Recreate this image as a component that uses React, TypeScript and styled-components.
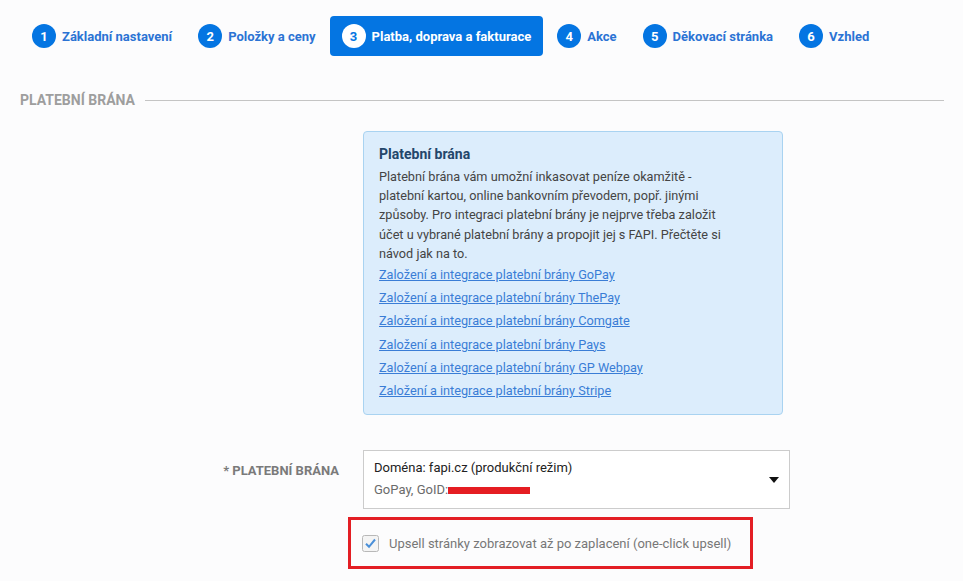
import styled, { createGlobalStyle } from "styled-components"

const GlobalStyle = createGlobalStyle`
  html, body {
    margin: 0;
    padding: 0;
    background: #fcfcfd;
    font-family: Roboto, "Noto Sans", Arial, sans-serif;
  }
`

const Page = styled.div`
  width: 963px;
  height: 581px;
  overflow: hidden;
  padding: 16px 19px 0 20px;
  box-sizing: border-box;
`

const Tabs = styled.nav`
  display: flex;
  gap: 2px;
  height: 40px;
`

const Tab = styled.div<{ $active?: boolean }>`
  display: flex;
  align-items: center;
  gap: 6px;
  padding: 0 12px;
  border-radius: 4px;
  background: ${(p) => (p.$active ? "#0475e2" : "transparent")};
  color: ${(p) => (p.$active ? "#ffffff" : "#2b73d4")};
  font-size: 13px;
  font-weight: 700;
  white-space: nowrap;
`

const Step = styled.span<{ $active?: boolean }>`
  width: 24px;
  height: 24px;
  border-radius: 50%;
  display: flex;
  align-items: center;
  justify-content: center;
  background: ${(p) => (p.$active ? "#ffffff" : "#0475e2")};
  color: ${(p) => (p.$active ? "#0475e2" : "#ffffff")};
  font-size: 13px;
  font-weight: 700;
`

const SectionHead = styled.div`
  display: flex;
  align-items: center;
  gap: 10px;
  margin-top: 36px;
  color: #9e9e9e;
  font-size: 14px;
  font-weight: 700;
  text-transform: uppercase;
  &::after {
    content: "";
    flex: 1;
    height: 1px;
    background: #c4c4c4;
  }
`

const Row = styled.div`
  display: grid;
  grid-template-columns: 319px 1fr;
  column-gap: 24px;
  align-items: start;
`

const Label = styled.div`
  text-align: right;
  margin-top: 35px;
  padding-top: 13px;
  color: #7a7a7a;
  font-size: 13px;
  font-weight: 700;
  text-transform: uppercase;
`

const InfoBox = styled.div`
  grid-column: 2;
  width: 420px;
  box-sizing: border-box;
  margin-top: 23px;
  padding: 12px 15px 12px;
  background: #dcedfc;
  border: 1px solid #a9d3f1;
  border-radius: 4px;
`

const InfoTitle = styled.div`
  color: #23466a;
  font-size: 14px;
  font-weight: 700;
  line-height: 20px;
  margin-bottom: 3px;
`

const InfoText = styled.p`
  margin: 0;
  max-width: 358px;
  color: #444444;
  font-size: 12.7px;
  line-height: 19.2px;
`

const InfoLink = styled.a`
  display: block;
  color: #3a7dd6;
  font-size: 12.7px;
  line-height: 23.2px;
  text-decoration: underline;
`

const Select = styled.div`
  position: relative;
  width: 427px;
  box-sizing: border-box;
  margin-top: 35px;
  padding: 6px 10px 7px;
  background: #ffffff;
  border: 1px solid #cccccc;
  font-size: 13px;
  line-height: 22px;
`

const SelectMain = styled.div`
  color: #222222;
`

const SelectSub = styled.div`
  display: flex;
  align-items: center;
  color: #6b6b6b;
`

const Redacted = styled.span`
  display: inline-block;
  width: 82px;
  height: 7px;
  background: #e51d22;
`

const Caret = styled.span`
  position: absolute;
  right: 10px;
  top: 26px;
  width: 0;
  height: 0;
  border-left: 5px solid transparent;
  border-right: 5px solid transparent;
  border-top: 6px solid #111111;
`

const Highlight = styled.div`
  grid-column: 2;
  width: 405px;
  height: 52px;
  box-sizing: border-box;
  margin: 8px 0 0 -15px;
  padding: 0 11px;
  border: 3px solid #e31e24;
  display: flex;
  align-items: center;
  gap: 10px;
`

const CheckLabel = styled.span`
  color: #777777;
  font-size: 13px;
  white-space: nowrap;
`

const Checkbox = () => (
  <svg width="17" height="17" viewBox="0 0 17 17">
    <rect x="0.5" y="0.5" width="16" height="16" rx="2" fill="#f4f4f4" stroke="#b8b8b8" />
    <path d="M4 8.8 L7 11.8 L13 4.5" fill="none" stroke="#4a8fd8" strokeWidth="2" />
  </svg>
)

const tabs = [
  "Základní nastavení",
  "Položky a ceny",
  "Platba, doprava a fakturace",
  "Akce",
  "Děkovací stránka",
  "Vzhled",
]

const links = ["GoPay", "ThePay", "Comgate", "Pays", "GP Webpay", "Stripe"]

export default function App() {
  return (
    <Page>
      <GlobalStyle />
      <Tabs>
        {tabs.map((t, i) => (
          <Tab key={t} $active={i === 2}>
            <Step $active={i === 2}>{i + 1}</Step>
            {t}
          </Tab>
        ))}
      </Tabs>
      <SectionHead>Platební brána</SectionHead>
      <Row>
        <InfoBox>
          <InfoTitle>Platební brána</InfoTitle>
          <InfoText>
            Platební brána vám umožní inkasovat peníze okamžitě - platební
            kartou, online bankovním převodem, popř. jinými způsoby. Pro
            integraci platební brány je nejprve třeba založit účet u vybrané
            platební brány a propojit jej s FAPI. Přečtěte si návod jak na to.
          </InfoText>
          {links.map((l) => (
            <InfoLink key={l} href="#">
              Založení a integrace platební brány {l}
            </InfoLink>
          ))}
        </InfoBox>
      </Row>
      <Row>
        <Label>* Platební brána</Label>
        <Select>
          <SelectMain>Doména: fapi.cz (produkční režim)</SelectMain>
          <SelectSub>
            GoPay, GoID:
            <Redacted />
          </SelectSub>
          <Caret />
        </Select>
        <Highlight>
          <Checkbox />
          <CheckLabel>Upsell stránky zobrazovat až po zaplacení (one-click upsell)</CheckLabel>
        </Highlight>
      </Row>
    </Page>
  )
}
